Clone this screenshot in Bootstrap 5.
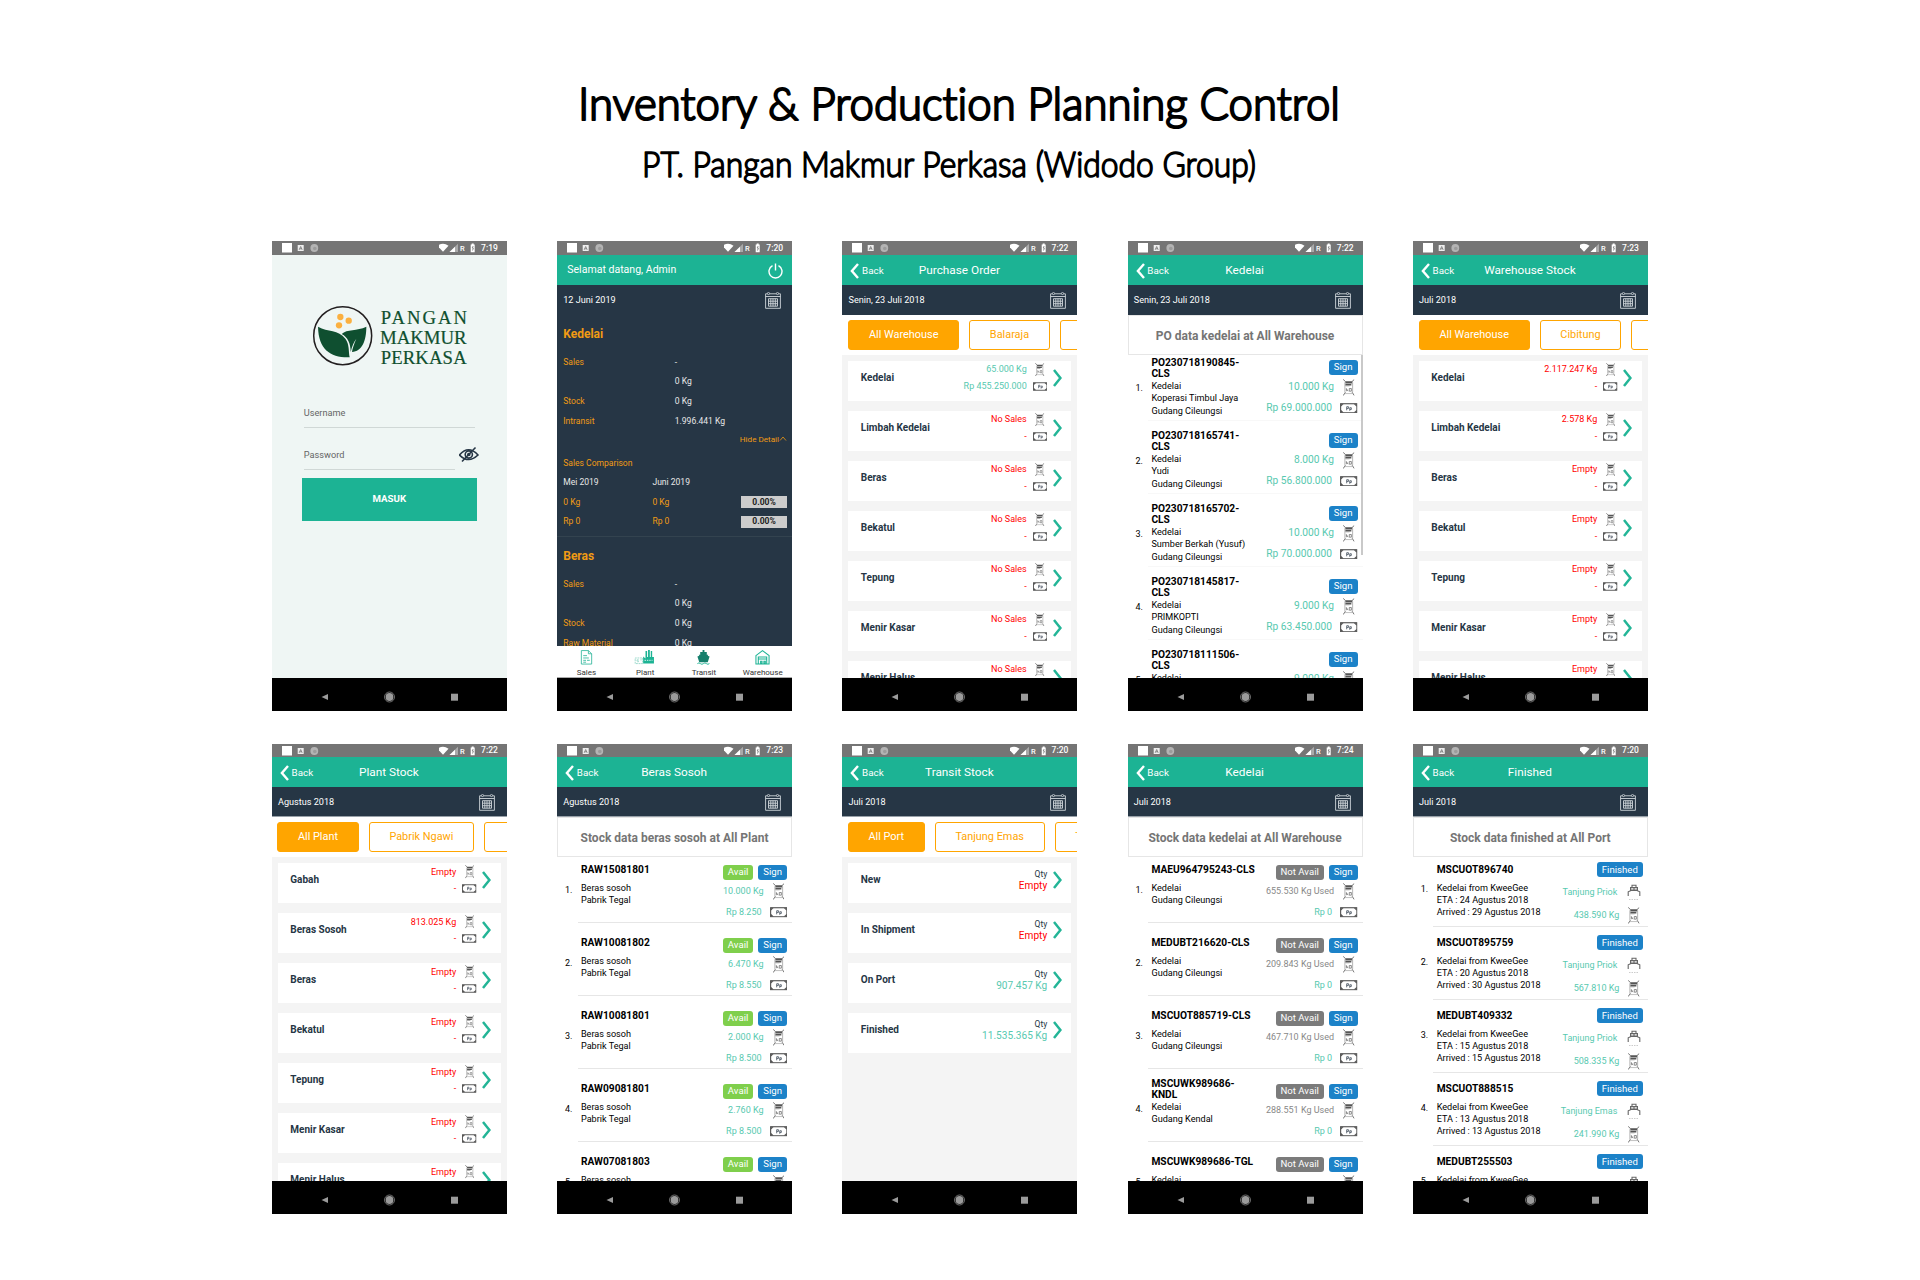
<!DOCTYPE html>
<html lang="id">
<head>
<meta charset="utf-8">
<meta name="viewport" content="width=device-width, initial-scale=1">
<title>Inventory &amp; Production Planning Control</title>
<link href="https://cdn.jsdelivr.net/npm/bootstrap@5.3.0/dist/css/bootstrap.min.css" rel="stylesheet">
<style>
  :root { --teal:#1cb394; --navy:#263645; --amber:#ffa500; --mint:#58c9b0; }
  body { font-family: Roboto, "Liberation Sans", sans-serif; background:#fff; width:1920px; height:1280px; overflow:hidden; color:#000; }
  svg { display:block; flex:none; }
  .sheet-head { height:241px; padding-top:70px; padding-left:560px; }
  .sheet-head text { font-family:Lato, "Noto Sans", sans-serif; font-weight:300; font-variant-ligatures:none; stroke:#000; stroke-linejoin:round; stroke-linecap:round; }
  .shelf { padding-left:271.8px; gap:50.25px; margin-bottom:33px; }
  .phone { width:235px; height:470px; flex:none; overflow:hidden; line-height:1; font-size:9px; }
  .statusbar { height:14px; background:#757575; color:#fff; font-size:8.5px; font-weight:500; padding:0 9px 0 10px; flex:none; }
  .shelf-b .statusbar { height:13.4px; }
  .appbar { height:30px; background:var(--teal); color:#fff; flex:none; padding:1px 9px 0 8.2px; }
  .appbar-title { font-size:11.8px; }
  .appbar-side { width:60px; font-size:9.8px; gap:2.6px; }
  .datebar { height:30px; background:var(--navy); color:#fff; font-size:9.1px; padding:1px 11.5px 0 6.2px; flex:none; }
  .shelf-b .datebar { border-bottom:1px solid #98a1a9; }
  .pane { flex:1 1 0; min-height:0; overflow:hidden; }
  .softkeys { height:33px; background:#000; flex:none; padding-top:5px; }
  .login { background:#eff6f4; }
  .login-logo { margin:49px 0 0 39.5px; }
  .field { margin-left:32px; height:42px; color:#666; font-size:9.2px; }
  .field-first { margin-top:31px; }
  .field-line { border-bottom:1px solid #d0d8d6; height:30px; padding-top:10px; }
  .field-line.wide { width:171px; } .field-line.short { width:151px; }
  .masuk { margin:-4px 0 0 30px; width:175px; height:42.5px; background:var(--teal); font-size:9.7px; border-radius:0; border:0; color:#fff; font-weight:700; }
  .dash { background:var(--navy); color:#e8e8e8; font-size:8.55px; padding:0 5px 0 6.2px; }
  .dash .gold { color:#f09b14; }
  .dash-h { height:36.8px; font-size:12px; font-weight:700; padding-top:1px; }
  .dash-r { height:19.6px; padding-top:1px; }
  .dash-more { height:22.4px; padding-top:5px; font-size:8.1px; }
  .w-key { width:111.5px; } .w-cmp { width:89.2px; }
  .pct { margin-left:auto; width:46px; height:12px; background:#ccc; color:#222; font-weight:700; }
  .dash-hr { margin:5px -5px 0 -6.5px; height:1px; background:#33434f; }
  .tabbar { height:32px; background:#fff; border-bottom:1px solid #aaa; color:#333; font-size:8px; flex:none; }
  .pills { height:40px; padding:5px 0 0 6px; gap:10px; background:#fff; overflow:hidden; flex:none; }
  .pill { height:30px; flex:none; border:1px solid var(--amber); border-radius:3px; color:var(--amber); font-size:10.9px; padding:1px 19.7px 0; min-width:60px; }
  .pill.on { background:var(--amber); color:#fff; }
  .shelf-b .pills { padding-left:5.4px; }
  .stock { background:#f4f4f4; padding:6px 6.3px 0 6.2px; }
  .tile { height:40px; margin-bottom:10px; background:#fff; padding:0 9.5px 6px 12.3px; }
  .tile-name { color:var(--navy); font-weight:700; font-size:10px; }
  .tile-line { height:16.7px; gap:6px; }
  .tile-ico { width:14.5px; }
  .tile-go { margin-left:5.3px; }
  .red { color:#f00; } .mint { color:var(--mint); } .dim { color:#888; }
  .port { font-size:10.1px; line-height:12.6px; }
  .port small { font-size:8.5px; color:var(--navy); }
  .listhead { height:40px; border:1px solid #e6e6e6; color:#757575; font-weight:700; font-size:12px; flex:none; background:#fff; padding-top:1px; }
  .entry { height:73px; border-bottom:1px solid #e6e6e6; margin-left:20.5px; padding-left:3.4px; }
  .entries { margin-top:-7px; --top:8.2px; --btop:14.3px; --bgap:2px; --rh:20.6px; background:#fff; }
  .entries.po { margin-top:-6.7px; --btop:11.4px; --bgap:2.6px; font-size:10.2px; }
  .entries.po .entry { border-color:#f8f8f8; }
  .entries.ship { margin-top:-3.6px; --top:4.4px; --btop:8.4px; --bgap:4.5px; --rh:22.6px; }
  .entry-no { width:16px; margin-left:-16px; padding-top:calc(var(--top) + 27px); font-size:9px; }
  .entry-main { padding-top:var(--top); font-size:9.1px; line-height:12.2px; white-space:nowrap; width:106px; flex:none; }
  .entry-code { height:23.6px; line-height:11.8px; font-size:10.2px; font-weight:700; }
  .entry-side { padding-top:var(--btop); padding-right:5px; flex:1; }
  .entry-side .tagrow { gap:5px; margin-bottom:var(--bgap); }
  .tag { height:15px; border-radius:3px; color:#fff; font-size:9.6px; padding:0 5px; white-space:nowrap; }
  .entry-line { height:var(--rh); gap:6px; white-space:nowrap; }
  .entry-ico { width:17.5px; }
  .c-blue { background:#1c82c8; } .c-green { background:#7fcf4c; } .c-grey { background:#7b7b7b; }
  .scroller { position:absolute; right:0; top:114px; width:2px; height:200px; background:#c9c9c9; }
</style>
</head>
<body>
<svg width="0" height="0" class="position-absolute">
  <symbol id="sack" viewBox="0 0 11 16"><g fill="none" stroke="#6a6a6a" stroke-width=".9"><path d="M.2.3 2.500 2.500M10.800.3 8.500 2.500M2.300 12.500.2 15.700M8.700 12.500l2.100 3.200"/><path d="M1.800 3v9.500M9.200 3v9.500" stroke="#999" stroke-width=".7"/><path d="M1.500 13.800h8" stroke="#aaa" stroke-width=".7"/><path d="M3.200 11.500V9l1.600 2.500M6 9h2v2.500H6z" stroke="#777" stroke-width=".8"/></g><path fill="#555" d="M2.300 2h6.500v1.600H2.300zM2.300 4.300h5.700v1.700H2.300z"/><path fill="#999" d="M2.300 3.600h6.500v.7H2.300zM2.300 6h4v.9h-4z"/></symbol>
  <symbol id="cash" viewBox="0 0 17 10"><rect x=".6" y=".6" width="15.800" height="8.800" fill="#fff" stroke="#555" stroke-width="1.100"/><path d="M1 1h2L1 3zM16 1h-2l2 2zM1 9h2L1 7zM16 9h-2l2-2z" fill="#555" stroke="#555" stroke-width=".6"/><path d="M6.500 7V3.500h1.700v1.700H6.500M9.500 7.500V4.500h1.500v1.700H9.500" fill="none" stroke="#5a6470" stroke-width=".9"/></symbol>
  <symbol id="boat" viewBox="0 0 14 17"><g fill="none" stroke="#666" stroke-width="1.100"><path d="M5 3V1.300h4V3M1.200 12V7.800L4 6.500h6l2.800 1.300V12M7 3v4"/><path d="M2 15.500h10" stroke="#ccc" stroke-dasharray="1.500 1"/></g><path fill="#666" d="M3 3h8v1.200H3zM3 4.200h1.200V7H3zM9.800 4.200H11V7H9.800zM4 5.500h6v1.600H4z"/></symbol>
  <symbol id="cal" viewBox="0 0 16 17"><g fill="none" stroke="#cfd6da" stroke-width=".9"><path d="M.6 1.800h14.800v14.500H.6zM.6 4.500h14.800M3.500 6.700h9v7.500h-9zM3.500 9.200h9M3.500 11.700h9M5.800 6.700v7.500M8 6.700v7.500M10.300 6.700v7.500"/></g><g fill="#263645" stroke="#cfd6da" stroke-width=".8"><circle cx="3.500" cy="1.500" r="1.100"/><circle cx="12.500" cy="1.500" r="1.100"/></g></symbol>
  <symbol id="next" viewBox="0 0 9 18"><path d="M1 1 7.400 9 1 17" fill="none" stroke="#23b597" stroke-width="2.500"/></symbol>
  <symbol id="prev" viewBox="0 0 9 16"><path d="M8 1 1.900 8 8 15" fill="none" stroke="#fff" stroke-width="2.400"/></symbol>
</svg>

<header class="sheet-head">
  <svg width="800" height="130">
    <text x="18" y="49.500" font-size="46" stroke-width="2.200" textLength="762" lengthAdjust="spacingAndGlyphs">Inventory &amp; Production Planning Control</text>
    <text x="82" y="106.500" font-size="35" stroke-width="1.600" textLength="614" lengthAdjust="spacingAndGlyphs">PT. Pangan Makmur Perkasa (Widodo Group)</text>
  </svg>
</header>
<main>
  <section class="shelf shelf-a d-flex" id="shelfA"></section>
  <section class="shelf shelf-b d-flex" id="shelfB"></section>
</main>

<script src="https://cdn.jsdelivr.net/npm/bootstrap@5.3.0/dist/js/bootstrap.bundle.min.js"></script>
<script>
const icon = (id, w, h) => `<svg width="${w}" height="${h}"><use href="#${id}"/></svg>`;

const statusbar = time => `<div class="statusbar d-flex align-items-center">
  <svg width="40" height="12" viewBox="0 0 40 12"><rect y="1" width="10" height="9.500" fill="#fff"/><rect x="15.700" y="3" width="6" height="6" fill="#eee"/><path d="M17.200 7.800 18.700 4.500 20.200 7.800M17.700 6.800h2" stroke="#666" stroke-width=".7" fill="none"/><circle cx="32.300" cy="6" r="3.900" fill="#b4b4b4"/><circle cx="32.800" cy="6.500" r="1.800" fill="#9c9c9c"/></svg>
  <svg class="ms-auto" width="38" height="12" viewBox="0 0 38 12"><path d="M-1.500 3.800Q4-.4 9.500 3.800L4 9.800z" fill="#fff"/><path d="M10.500 10 19 1.800V10z" fill="#aaa"/><path d="M10.500 10 16 4.700V10z" fill="#fff"/><text x="21" y="9" font-size="7.500" fill="#fff">R</text><path d="M31.700 2.500h1V1.500h2v1h1V10.200h-4z" fill="#fff"/><path d="M34.200 4 33.200 6h1.200L33.500 8.500" stroke="#777" stroke-width=".8" fill="none"/></svg>
  <span class="ps-1">${time}</span></div>`;

const softkeys = `<div class="softkeys d-flex align-items-center"><svg width="235" height="16" viewBox="0 0 235 16" fill="#9b9b9b"><path d="M49.500 8 56 5v6z"/><circle cx="117.500" cy="8" r="3.900"/><circle cx="117.500" cy="8" r="5" fill="none" stroke="#9b9b9b" stroke-width=".7"/><path d="M179 4.700h7v7h-7z"/></svg></div>`;

const appbar = title => `<div class="appbar d-flex align-items-center justify-content-between">
  <div class="appbar-side d-flex align-items-center">${icon('prev', 9, 16)}<span>Back</span></div>
  <div class="appbar-title text-nowrap">${title}</div><div class="appbar-side"></div></div>`;

const datebar = text => `<div class="datebar d-flex align-items-center justify-content-between"><span>${text}</span>${icon('cal', 16, 17)}</div>`;

const phone = (time, body) => `<article class="phone d-flex flex-column position-relative">${statusbar(time)}${body}${softkeys}</article>`;

const login = phone('7:19', `<div class="pane login">
  <svg class="login-logo" width="160" height="63.300" viewBox="140 208 480 190">
    <circle cx="235" cy="303" r="87" fill="none" stroke="#231f20" stroke-width="4.500"/>
    <g fill="#fbb040"><circle cx="228" cy="247" r="9.500"/><circle cx="253" cy="258" r="9.500"/><circle cx="224" cy="272" r="9.500"/></g>
    <path fill="#0f4f30" d="M161 276C190 293 222 284 243 312 256 330 252 350 256 368 200 370 162 345 161 276z"/>
    <path fill="#0f4f30" d="M306 276C278 290 248 282 232 298 250 308 259 326 259 352 263 335 268 322 276 312 269 328 264 342 263 352 293 350 306 318 306 276z"/>
    <g fill="#10502f" stroke="#10502f" stroke-width=".6" font-family="Liberation Serif, serif" font-size="56"><text x="349" y="268" textLength="259">PANGAN</text><text x="347" y="328" textLength="260" lengthAdjust="spacingAndGlyphs">MAKMUR</text><text x="349" y="388" textLength="258">PERKASA</text></g>
  </svg>
  <div class="field field-first"><div class="field-line wide">Username</div></div>
  <div class="field d-flex"><div class="field-line short">Password</div>
    <svg class="ms-1" width="20" height="28" viewBox="1.500 0 20 28"><g fill="none" stroke="#263645" stroke-width="1.600"><path d="M2 15Q11 4.500 20.500 15 11 24 2 15z"/><circle cx="11.300" cy="14.500" r="3.600"/><circle cx="11.300" cy="14.500" r="1"/><path d="M4.500 21.500 18 7.500"/></g></svg></div>
  <button class="masuk btn p-0 d-flex align-items-center justify-content-center">MASUK</button>
</div>`);

const kv = (k, v) => `<div class="dash-r d-flex align-items-center"><span class="gold w-key">${k}</span><span>${v}</span></div>`;
const cmp = (a, b, cls, pct) => `<div class="dash-r d-flex align-items-center ${cls}"><span class="w-cmp">${a}</span><span>${b}</span>${pct ? `<span class="pct d-flex align-items-center justify-content-center">${pct}</span>` : ''}</div>`;
const tabs = {
  Sales: '<path d="M2 .6h7.500L13 4v11H2zM9.500.6V4H13M4 6h4M4 8.500h6M4 11h3M8 11h3M4 13h3" fill="none" stroke="#2fb79b" stroke-width=".9"/>',
  Plant: '<path d="M-3.500 14.500V8.500h8v6zM-1.500 10.500h1.500v2h-1.500zM2 10.500h1.500" fill="none" stroke="#7fcfbd" stroke-width=".8" stroke-dasharray="2 .8"/><path d="M5 14.500V7l2.500 2V1h1.700v6.500h1V0h1.900v7.500h1V1h1.500v6.500h1.900v7z" fill="#1cb394"/><path d="M6.500 11h8.500" stroke="#fff" stroke-width=".9" stroke-dasharray="1.500 1"/>',
  Transit: '<path d="M6.500 0h2v2H11v3h1.500l-.5 1 2 1-2 6H3L1 7l2-1-.5-1H4V2h2.500z" fill="#157f6c"/><path d="M1 14.500q1.600-1.500 3.200 0t3.200 0 3.200 0 3.200 0" stroke="#1cb394" fill="none"/>',
  Warehouse: '<path d="M.5 6 7.500.7l7 5.300v9H.5zM3 15V7.500h9V15M3 9.500h9M5.500 12h1.500v2H5.500zM9 12h1.500v2H9z" fill="none" stroke="#1cb394" stroke-width="1.100"/>'
};
const dashboard = phone('7:20', `<div class="appbar d-flex align-items-center justify-content-between fs-6"><span style="margin-left:2px;font-size:10.55px">Selamat datang, Admin</span>
    <svg width="15" height="16" viewBox="0 0 15 16"><g fill="none" stroke="#fff" stroke-width="1.400"><path d="M4.500 2.700A6.500 6.500 0 1 0 10.500 2.700M7.500.5v7"/></g></svg></div>
  ${datebar('12 Juni 2019')}
  <div class="pane dash">
    <div class="dash-h gold d-flex align-items-center">Kedelai</div>
    ${kv('Sales', '-')}${kv('', '0 Kg')}${kv('Stock', '0 Kg')}${kv('Intransit', '1.996.441 Kg')}
    <div class="dash-more gold d-flex justify-content-end align-items-start">Hide Detail<svg width="8" height="8" viewBox="0 0 8 8"><path d="M1 5.500 4 2l3 3.500" fill="none" stroke="#f09b14" stroke-width=".8"/></svg></div>
    ${kv('<span class="text-nowrap">Sales Comparison</span>', '')}
    ${cmp('Mei 2019', 'Juni 2019', '')}${cmp('0 Kg', '0 Kg', 'gold', '0.00%')}${cmp('Rp 0', 'Rp 0', 'gold', '0.00%')}
    <div class="dash-hr"></div>
    <div class="dash-h gold d-flex align-items-center">Beras</div>
    ${kv('Sales', '-')}${kv('', '0 Kg')}${kv('Stock', '0 Kg')}${kv('Raw Material', '0 Kg')}
  </div>
  <div class="tabbar d-flex">${Object.entries(tabs).map(([t, p]) => `<div class="col-3 d-flex flex-column align-items-center pt-1"><svg class="overflow-visible" width="15" height="15" viewBox="0 0 15 16">${p}</svg><span class="pt-1">${t}</span></div>`).join('')}</div>`);

const pills = list => `<div class="pills d-flex">${list.map((p, i) => `<div class="pill d-flex align-items-center ${i ? '' : 'on'}">${p}</div>`).join('')}</div>`;

const tile = ([name, qty, money = '-', cls = 'red']) => `<div class="tile d-flex align-items-center">
  <span class="tile-name">${name}</span>
  <div class="ms-auto ${cls}"><div class="tile-line d-flex align-items-center justify-content-end"><span>${qty}</span><span class="tile-ico d-flex justify-content-center">${icon('sack', 9.5, 13.5)}</span></div>
  <div class="tile-line d-flex align-items-center justify-content-end"><span>${money}</span><span class="tile-ico">${icon('cash', 14.5, 9)}</span></div></div>
  <span class="tile-go">${icon('next', 9, 18)}</span></div>`;

const portTile = ([name, qty, cls]) => `<div class="tile d-flex align-items-center"><span class="tile-name">${name}</span>
  <div class="ms-auto port text-end ${cls}"><small class="d-block">Qty</small>${qty}</div><span class="tile-go">${icon('next', 9, 18)}</span></div>`;

const stockPhone = (time, title, date, pl, rows, fn = tile) => phone(time, `${appbar(title)}${datebar(date)}${pills(pl)}<div class="pane stock">${rows.map(fn).join('')}</div>`);

const line = (text, ico, cls, pad) => `<div class="entry-line d-flex align-items-center justify-content-end ${cls}"><span style="padding-right:${pad}px">${text}</span><span class="entry-ico d-flex justify-content-center">${ico}</span></div>`;
const entry = (r, i) => `<div class="entry d-flex">
  <span class="entry-no">${i + 1}.</span>
  <div class="entry-main"><div class="entry-code d-flex align-items-center"><span>${r.code}</span></div>${r.lines.join('<br>')}</div>
  <div class="entry-side"><div class="tagrow d-flex justify-content-end">${r.tags.map(([t, c]) => `<span class="tag d-flex align-items-center ${c}">${t}</span>`).join('')}</div>${r.side}</div></div>`;
const listPhone = (time, title, date, head, cls, rows) => phone(time, `${appbar(title)}${datebar(date)}<div class="listhead d-flex align-items-center justify-content-center text-nowrap position-relative z-1">${head}</div><div class="pane"><div class="entries ${cls}">${rows.map(entry).join('')}</div></div>${cls === 'po' ? '<div class="scroller z-1"></div>' : ''}`);

const SACK = icon('sack', 11.5, 17), CASH = icon('cash', 17.5, 10.5), BOAT = icon('boat', 14, 17);
const sign = ['Sign', 'c-blue'];
const po = (code, who, kg, rp) => ({ code: code + '-<br>CLS', lines: ['Kedelai', who, 'Gudang Cileungsi'], tags: [sign], side: line(kg, SACK, 'mint', 0) + line('Rp ' + rp, CASH, 'mint', 2) });
const raw = (code, kg, rp) => ({ code, lines: ['Beras sosoh', 'Pabrik Tegal'], tags: [['Avail', 'c-green'], sign], side: line(kg, SACK, 'mint', 0) + (rp ? line('Rp ' + rp, CASH, 'mint', 2) : '') });
const bean = (code, wh, kg) => ({ code, lines: ['Kedelai', wh], tags: [['Not Avail', 'c-grey'], sign], side: kg ? line(kg + ' Kg Used', SACK, 'dim', 0) + line('Rp 0', CASH, 'mint', 2) : line('', SACK, '', 0) });
const done = (code, eta, arr, port, kg) => ({ code, lines: eta ? ['Kedelai from KweeGee', `ETA : ${eta} Agustus 2018`, `Arrived : ${arr} Agustus 2018`] : ['Kedelai from KweeGee'], tags: [['Finished', 'c-blue']], side: line(port, BOAT, 'mint', 2) + (kg ? line(kg + ' Kg', SACK, 'mint', 0) : '') });

shelfA.innerHTML = login + dashboard +
  stockPhone('7:22', 'Purchase Order', 'Senin, 23 Juli 2018', ['All Warehouse', 'Balaraja', ''],
    [['Kedelai', '65.000 Kg', 'Rp 455.250.000', 'mint'], ...['Limbah Kedelai', 'Beras', 'Bekatul', 'Tepung', 'Menir Kasar', 'Menir Halus'].map(n => [n, 'No Sales'])]) +
  listPhone('7:22', 'Kedelai', 'Senin, 23 Juli 2018', 'PO data kedelai at All Warehouse', 'po', [
    po('PO230718190845', 'Koperasi Timbul Jaya', '10.000 Kg', '69.000.000'), po('PO230718165741', 'Yudi', '8.000 Kg', '56.800.000'),
    po('PO230718165702', 'Sumber Berkah (Yusuf)', '10.000 Kg', '70.000.000'), po('PO230718145817', 'PRIMKOPTI', '9.000 Kg', '63.450.000'),
    { code: 'PO230718111506-<br>CLS', lines: ['Kedelai'], tags: [sign], side: line('9.000 Kg', SACK, 'mint', 0) }]) +
  stockPhone('7:23', 'Warehouse Stock', 'Juli 2018', ['All Warehouse', 'Cibitung', ''],
    [['Kedelai', '2.117.247 Kg'], ['Limbah Kedelai', '2.578 Kg'], ...['Beras', 'Bekatul', 'Tepung', 'Menir Kasar', 'Menir Halus'].map(n => [n, 'Empty'])]);

shelfB.innerHTML =
  stockPhone('7:22', 'Plant Stock', 'Agustus 2018', ['All Plant', 'Pabrik Ngawi', ''],
    [['Gabah', 'Empty'], ['Beras Sosoh', '813.025 Kg'], ...['Beras', 'Bekatul', 'Tepung', 'Menir Kasar', 'Menir Halus'].map(n => [n, 'Empty'])]) +
  listPhone('7:23', 'Beras Sosoh', 'Agustus 2018', 'Stock data beras sosoh at All Plant', '', [
    raw('RAW15081801', '10.000 Kg', '8.250'), raw('RAW10081802', '6.470 Kg', '8.550'), raw('RAW10081801', '2.000 Kg', '8.500'), raw('RAW09081801', '2.760 Kg', '8.500'), { ...raw('RAW07081803', ''), lines: ['Beras sosoh'] }]) +
  stockPhone('7:20', 'Transit Stock', 'Juli 2018', ['All Port', 'Tanjung Emas', 'T'],
    [['New', 'Empty', 'red'], ['In Shipment', 'Empty', 'red'], ['On Port', '907.457 Kg', 'mint'], ['Finished', '11.535.365 Kg', 'mint']], portTile) +
  listPhone('7:24', 'Kedelai', 'Juli 2018', 'Stock data kedelai at All Warehouse', '', [
    bean('MAEU964795243-CLS', 'Gudang Cileungsi', '655.530'), bean('MEDUBT216620-CLS', 'Gudang Cileungsi', '209.843'), bean('MSCUOT885719-CLS', 'Gudang Cileungsi', '467.710'),
    bean('MSCUWK989686-<br>KNDL', 'Gudang Kendal', '288.551'), { ...bean('MSCUWK989686-TGL', ''), lines: ['Kedelai'] }]) +
  listPhone('7:20', 'Finished', 'Juli 2018', 'Stock data finished at All Port', 'ship', [
    done('MSCUOT896740', 24, 29, 'Tanjung Priok', '438.590'), done('MSCUOT895759', 20, 30, 'Tanjung Priok', '567.810'), done('MEDUBT409332', 15, 15, 'Tanjung Priok', '508.335'),
    done('MSCUOT888515', 13, 13, 'Tanjung Emas', '241.990'), done('MEDUBT255503', 0, 0, '')]);
</script>
</body>
</html>
